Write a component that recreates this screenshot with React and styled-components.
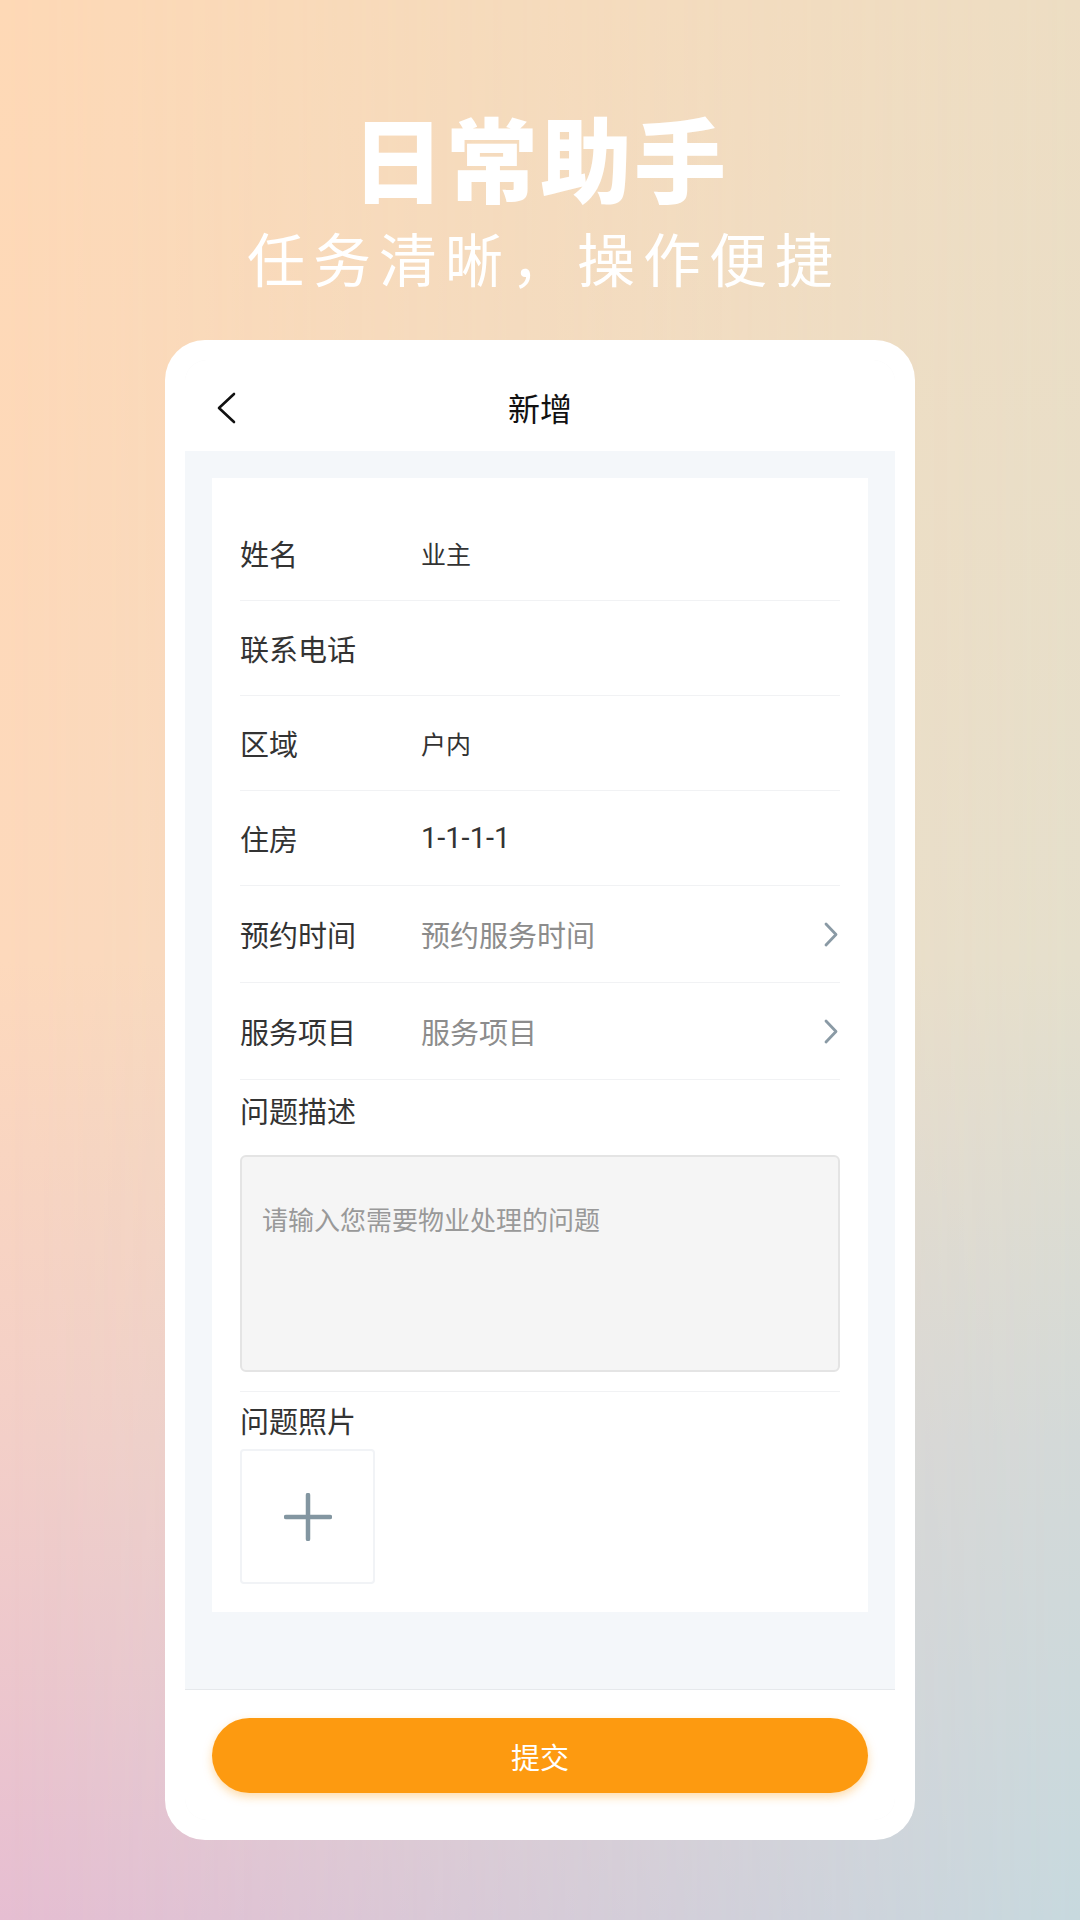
import React from 'react';
import styled, { createGlobalStyle } from 'styled-components';

const GlobalStyle = createGlobalStyle`
  html, body {
    margin: 0;
    padding: 0;
  }
  body {
    font-family: "Noto Sans CJK SC", "Noto Sans", sans-serif;
  }
`;

const Page = styled.div`
  position: relative;
  width: 1080px;
  height: 1920px;
  overflow: hidden;
  background: linear-gradient(to bottom, #fed9b6 0%, #fdd9bc 50%, #f3cfc8 75%, #e6bed2 100%);

  &::before {
    content: '';
    position: absolute;
    inset: 0;
    background: linear-gradient(to bottom, #edddc3 0%, #e5dfcc 50%, #d3d9d8 75%, #c7d9de 100%);
    -webkit-mask-image: linear-gradient(to right, transparent 0%, #000 100%);
    mask-image: linear-gradient(to right, transparent 0%, #000 100%);
  }
`;

const Content = styled.div`
  position: relative;
  display: flex;
  flex-direction: column;
  align-items: center;
  padding-top: 106px;
`;

const Headline = styled.h1`
  margin: 0;
  font-size: 92px;
  line-height: 100px;
  font-weight: 900;
  color: #fff;
  letter-spacing: 2px;
`;

const Tagline = styled.div`
  margin-top: 16px;
  font-size: 58px;
  line-height: 70px;
  font-weight: 400;
  color: #fff;
  letter-spacing: 8px;
  padding-left: 8px;
`;

const Phone = styled.div`
  margin-top: 48px;
  width: 750px;
  height: 1500px;
  box-sizing: border-box;
  padding: 20px;
  background: #fff;
  border-radius: 40px;
`;

const Screen = styled.div`
  height: 100%;
  display: flex;
  flex-direction: column;
  border-radius: 22px;
  overflow: hidden;
  box-shadow: inset 0 0 0 1px #f7f7f7;
`;

const NavBar = styled.div`
  position: relative;
  height: 91px;
  flex-shrink: 0;
  display: flex;
  align-items: center;
  justify-content: center;
  background: #fff;
`;

const BackButton = styled.div`
  position: absolute;
  left: 31px;
  top: 32px;
  width: 20px;
  height: 32px;
  display: flex;
`;

const NavTitle = styled.div`
  font-size: 32px;
  color: #111;
  margin-top: 2px;
`;

const Body = styled.div`
  flex: 1;
  background: #f4f7fa;
  padding: 27px;
  border-bottom: 1px solid #e6e9ec;
`;

const Card = styled.div`
  background: #fff;
  padding: 28px 28px 28px;
`;

const Row = styled.div`
  display: flex;
  align-items: center;
  height: ${(p) => p.$h || 94}px;
  border-bottom: 1px solid #f1f2f4;
`;

const Label = styled.div`
  width: 181px;
  flex-shrink: 0;
  font-size: 29px;
  color: #333;
`;

const Value = styled.div`
  flex: 1;
  font-family: Roboto, "Noto Sans CJK SC", sans-serif;
  font-size: ${(p) => (p.$small ? 25 : 29)}px;
  color: ${(p) => (p.$placeholder ? '#8c8c8c' : '#333')};
`;

const Chevron = styled.div`
  width: 14px;
  height: 25px;
  display: flex;
  margin-right: 2px;
`;

const Section = styled.div`
  padding-top: ${(p) => p.$top || 10}px;
  padding-bottom: ${(p) => p.$bottom || 0}px;
  border-bottom: ${(p) => (p.$divider ? '1px solid #f1f2f4' : 'none')};
`;

const SectionLabel = styled.div`
  font-size: 29px;
  line-height: 40px;
  color: #333;
`;

const TextArea = styled.textarea`
  display: block;
  box-sizing: border-box;
  margin-top: 25px;
  width: 100%;
  height: 217px;
  padding: 44px 20px 20px;
  border: 2px solid #e4e4e4;
  border-radius: 6px;
  background: #f5f5f5;
  font-family: inherit;
  font-size: 26px;
  line-height: 36px;
  color: #333;
  resize: none;
  outline: none;

  &::placeholder {
    color: #999;
  }
`;

const Upload = styled.div`
  margin-top: 9px;
  width: 135px;
  height: 135px;
  box-sizing: border-box;
  border: 2px solid #f1f3f6;
  border-radius: 4px;
  display: flex;
  align-items: center;
  justify-content: center;
`;

const Footer = styled.div`
  height: 130px;
  flex-shrink: 0;
  box-sizing: border-box;
  padding: 28px 27px 0;
  background: #fff;
`;

const SubmitButton = styled.button`
  width: 100%;
  height: 75px;
  border: none;
  border-radius: 38px;
  background: #fd9a10;
  box-shadow: 0 4px 10px rgba(253, 154, 16, 0.35);
  color: #fff;
  font-family: inherit;
  font-size: 29px;
  cursor: pointer;
`;

const ArrowRight = () => (
  <svg width="14" height="25" viewBox="0 0 14 25">
    <path d="M2 2 L12 12.5 L2 23" fill="none" stroke="#8a9aa5" strokeWidth="2.8" strokeLinecap="round" strokeLinejoin="round" />
  </svg>
);

const fields = [
  { label: '姓名', value: '业主', small: true },
  { label: '联系电话', value: '' },
  { label: '区域', value: '户内', small: true },
  { label: '住房', value: '1-1-1-1' },
  { label: '预约时间', value: '预约服务时间', placeholder: true, arrow: true },
  { label: '服务项目', value: '服务项目', placeholder: true, arrow: true },
];

export default function App() {
  return (
    <Page>
      <GlobalStyle />
      <Content>
        <Headline>日常助手</Headline>
        <Tagline>任务清晰，操作便捷</Tagline>
        <Phone>
          <Screen>
            <NavBar>
              <BackButton>
                <svg width="20" height="32" viewBox="0 0 20 32">
                  <path d="M18 2 L3 16 L18 30" fill="none" stroke="#111" strokeWidth="2.6" strokeLinecap="round" strokeLinejoin="round" />
                </svg>
              </BackButton>
              <NavTitle>新增</NavTitle>
            </NavBar>
            <Body>
              <Card>
                {fields.map((f) => (
                  <Row key={f.label} $h={f.arrow ? 96 : 94}>
                    <Label>{f.label}</Label>
                    <Value $small={f.small} $placeholder={f.placeholder}>{f.value}</Value>
                    {f.arrow && (
                      <Chevron>
                        <ArrowRight />
                      </Chevron>
                    )}
                  </Row>
                ))}
                <Section $top={10} $bottom={19} $divider>
                  <SectionLabel>问题描述</SectionLabel>
                  <TextArea placeholder="请输入您需要物业处理的问题" />
                </Section>
                <Section $top={8}>
                  <SectionLabel>问题照片</SectionLabel>
                  <Upload>
                    <svg width="48" height="48" viewBox="0 0 48 48">
                      <path d="M24 2 V46 M2 24 H46" stroke="#8396a1" strokeWidth="4.5" strokeLinecap="round" />
                    </svg>
                  </Upload>
                </Section>
              </Card>
            </Body>
            <Footer>
              <SubmitButton>提交</SubmitButton>
            </Footer>
          </Screen>
        </Phone>
      </Content>
    </Page>
  );
}
